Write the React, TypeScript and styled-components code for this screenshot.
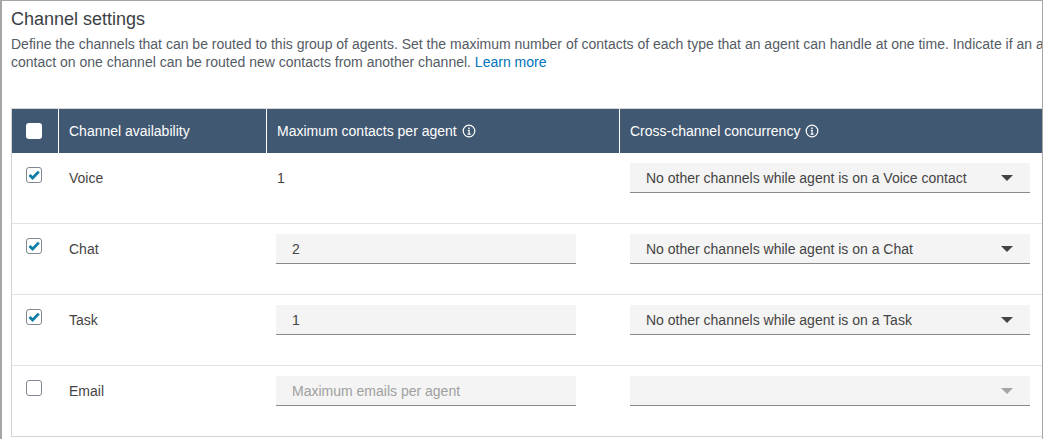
import React from 'react';
import styled, { createGlobalStyle } from 'styled-components';

const GlobalStyle = createGlobalStyle`
  html, body {
    margin: 0;
    padding: 0;
    background: #fff;
  }
`;

const COLUMNS = '47px 208px 353px 1fr';

interface Channel {
  name: string;
  checked: boolean;
  max: string;
  editable: boolean;
  placeholder?: string;
  concurrency: string;
  disabled?: boolean;
}

const channels: Channel[] = [
  { name: 'Voice', checked: true, max: '1', editable: false, concurrency: 'No other channels while agent is on a Voice contact' },
  { name: 'Chat', checked: true, max: '2', editable: true, concurrency: 'No other channels while agent is on a Chat' },
  { name: 'Task', checked: true, max: '1', editable: true, concurrency: 'No other channels while agent is on a Task' },
  { name: 'Email', checked: false, max: '', editable: true, placeholder: 'Maximum emails per agent', concurrency: '', disabled: true },
];

const InfoIcon = () => (
  <svg width="14" height="14" viewBox="0 0 14 14" fill="none" stroke="#fff" strokeWidth="1.2">
    <circle cx="7" cy="7" r="5.8" />
    <path d="M5.8 6.4H7.1V10M5.6 10.1H8.6" />
    <path d="M7 3.4V5" strokeWidth="1.5" />
  </svg>
);

const App = () => {
  return (
    <Frame>
      <GlobalStyle />
      <Title>Channel settings</Title>
      <Description>
        Define the channels that can be routed to this group of agents. Set the maximum number of contacts of each type that an agent can handle at one time. Indicate if an agent working on a
        <br />
        contact on one channel can be routed new contacts from another channel. <LearnMore>Learn more</LearnMore>
      </Description>
      <Table>
        <HeadRow>
          <HeadBoxCell>
            <HeadCheckbox />
          </HeadBoxCell>
          <HeadCell>Channel availability</HeadCell>
          <HeadCell>
            Maximum contacts per agent <InfoIcon />
          </HeadCell>
          <HeadCell $last>
            Cross-channel concurrency <InfoIcon />
          </HeadCell>
        </HeadRow>
        {channels.map((channel) => (
          <Row key={channel.name}>
            <CheckCell>
              <Checkbox>
                {channel.checked && (
                  <svg width="12" height="10" viewBox="0 0 12 10">
                    <path d="M1.5 5 4.6 8 10.8 1.6" fill="none" stroke="#0f7ea6" strokeWidth="2.8" />
                  </svg>
                )}
              </Checkbox>
            </CheckCell>
            <NameCell>{channel.name}</NameCell>
            <MaxCell>
              {channel.editable ? (
                <Field $placeholder={!channel.max}>{channel.max || channel.placeholder}</Field>
              ) : (
                <PlainValue>{channel.max}</PlainValue>
              )}
            </MaxCell>
            <SelectCell>
              <Select>
                <span>{channel.concurrency}</span>
                <Caret $disabled={channel.disabled} />
              </Select>
            </SelectCell>
          </Row>
        ))}
      </Table>
    </Frame>
  );
};

const Frame = styled.div`
  box-sizing: border-box;
  width: 1043px;
  height: 439px;
  overflow: hidden;
  border: 1px solid #a6a6a6;
  border-bottom: none;
  border-left-width: 2px;
  padding: 9px 0 0 9px;
  font-family: 'Liberation Sans', Arial, sans-serif;
  color: #444;
`;

const Title = styled.h2`
  margin: 0;
  font-size: 18px;
  font-weight: 400;
  line-height: 19px;
  color: #3b3f45;
`;

const Description = styled.p`
  margin: 6px 0 0;
  width: 1100px;
  font-size: 14px;
  line-height: 18px;
  white-space: nowrap;
  color: #545b64;
`;

const LearnMore = styled.a`
  color: #0073bb;
`;

const Table = styled.div`
  margin-top: 37px;
  width: 1032px;
  border: 1px solid #d5d5d5;
  border-right: none;
`;

const HeadRow = styled.div`
  display: grid;
  grid-template-columns: ${COLUMNS};
  height: 44px;
  background: #415872;
`;

const HeadBoxCell = styled.div`
  display: flex;
  align-items: center;
  padding-left: 14px;
  border-right: 1px solid #fff;
`;

const HeadCell = styled.div<{ $last?: boolean }>`
  display: flex;
  align-items: center;
  gap: 5px;
  padding-left: 10px;
  border-right: ${(p) => (p.$last ? 'none' : '1px solid #fff')};
  font-size: 14px;
  font-weight: 400;
  color: #fff;
`;

const HeadCheckbox = styled.span`
  width: 16px;
  height: 16px;
  background: #fff;
  border-radius: 3px;
`;

const Row = styled.div`
  display: grid;
  grid-template-columns: ${COLUMNS};
  height: 70px;
  border-bottom: 1px solid #e3e3e3;

  &:last-child {
    border-bottom: none;
  }
`;

const CheckCell = styled.div`
  display: flex;
  padding: 14px 0 0 14px;
`;

const Checkbox = styled.span`
  box-sizing: border-box;
  display: flex;
  align-items: center;
  justify-content: center;
  width: 16px;
  height: 16px;
  border: 1px solid #7f8790;
  border-radius: 3px;
  background: #fff;
`;

const NameCell = styled.div`
  padding: 17px 0 0 10px;
  font-size: 14px;
  line-height: 16px;
  color: #444;
`;

const MaxCell = styled.div`
  padding: 10px 0 0 9px;
`;

const PlainValue = styled.div`
  padding: 7px 0 0 1px;
  font-size: 14px;
  line-height: 16px;
  color: #444;
`;

const Field = styled.div<{ $placeholder?: boolean }>`
  box-sizing: border-box;
  display: flex;
  align-items: center;
  width: 300px;
  height: 30px;
  padding-left: 16px;
  background: #f4f4f4;
  border-bottom: 1px solid #8a8a8a;
  font-size: 14px;
  color: ${(p) => (p.$placeholder ? '#a0a0a0' : '#444')};
`;

const SelectCell = styled.div`
  padding: 10px 0 0 10px;
`;

const Select = styled.div`
  box-sizing: border-box;
  display: flex;
  align-items: center;
  justify-content: space-between;
  width: 400px;
  height: 30px;
  padding: 0 17px 0 16px;
  background: #f4f4f4;
  border-bottom: 1px solid #8a8a8a;
  font-size: 14px;
  color: #444;
`;

const Caret = styled.span<{ $disabled?: boolean }>`
  width: 0;
  height: 0;
  border-left: 6px solid transparent;
  border-right: 6px solid transparent;
  border-top: 6px solid ${(p) => (p.$disabled ? '#a6a6a6' : '#444')};
`;

export default App;
